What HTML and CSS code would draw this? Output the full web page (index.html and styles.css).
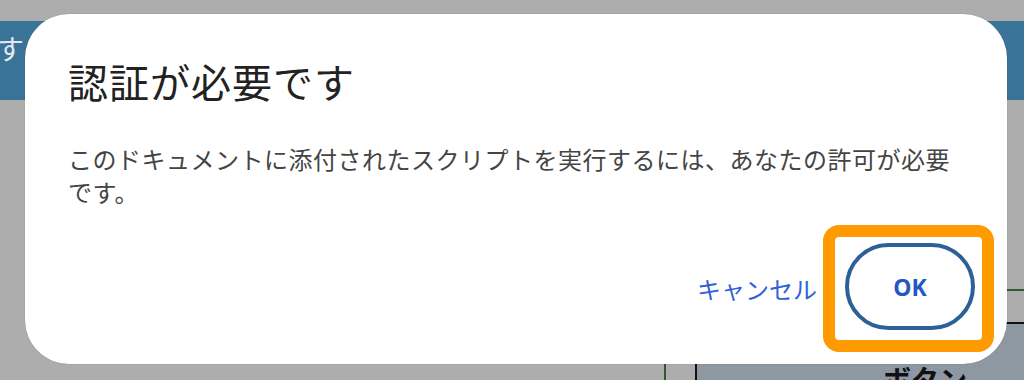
FILE: index.html
```html
<!DOCTYPE html>
<html lang="ja">
<head>
    <meta charset="UTF-8">
    <meta name="viewport" content="width=device-width, initial-scale=1.0">
    <title>認証が必要です</title>
    <link rel="stylesheet" href="styles.css">
</head>
<body>
    <div class="page">
        <div class="banner"><span class="banner-text">す</span></div>
        <div class="workspace">
            <div class="cell-left"></div>
            <div class="cell-right">
                <div class="cell-gap"></div>
                <div class="panel">
                    <span class="panel-label">ボタン</span>
                </div>
            </div>
        </div>
    </div>

    <div class="dialog">
        <h2 class="dialog-title">認証が必要です</h2>
        <p class="dialog-text">このドキュメントに添付されたスクリプトを実行するには、あなたの許可が必要です。</p>
        <div class="dialog-actions">
            <button class="btn-cancel">キャンセル</button>
            <div class="highlight">
                <button class="btn-ok">OK</button>
            </div>
        </div>
    </div>
</body>
</html>
```

FILE: styles.css
```css
body {
    margin: 0;
    height: 380px;
    overflow: hidden;
    background: #adadad;
    font-family: "Noto Sans CJK JP", "Noto Sans", sans-serif;
}
.page {
    padding-top: 21px;
}
.banner {
    height: 79px;
    background: #3a7398;
    color: #e2e9ef;
    font-size: 28px;
    line-height: 40px;
    padding-top: 7px;
    box-sizing: border-box;
    overflow: hidden;
}
.banner-text {
    margin-left: -4px;
}
.workspace {
    display: flex;
    margin-top: 189px;
    height: 91px;
}
.cell-left {
    width: 664px;
    border-right: 2px solid #2e5a30;
}
.cell-right {
    flex: 1;
    display: flex;
    border-top: 2px solid #2e5a30;
}
.cell-gap {
    width: 29px;
}
.panel {
    flex: 1;
    margin-top: 31px;
    background: #8d98a3;
    border-top: 2px solid #111;
    border-left: 2px solid #111;
    padding: 41px 0 0 186px;
    overflow: hidden;
}
.panel-label {
    font-size: 28px;
    line-height: 28px;
    font-weight: bold;
    color: #111;
}

/* modal */
.dialog {
    position: absolute;
    top: 14px;
    left: 25px;
    width: 982px;
    height: 350px;
    background: #fff;
    border-radius: 44px;
    box-shadow: 0 0 1px rgba(0, 0, 0, 0.35);
    display: flex;
    flex-direction: column;
}
.dialog-title {
    margin: 43px 43px 0;
    font-size: 40px;
    line-height: 48px;
    font-weight: normal;
    letter-spacing: 1px;
    color: #222;
}
.dialog-text {
    margin: 37px 43px 0;
    font-size: 24px;
    line-height: 33px;
    letter-spacing: 0.5px;
    color: #444;
}
.dialog-actions {
    display: flex;
    justify-content: flex-end;
    align-items: center;
    margin-top: 17px;
    padding-right: 13px;
}
button {
    font-family: inherit;
    background: none;
    border: none;
    cursor: pointer;
    padding: 0;
}
.btn-cancel {
    font-size: 24px;
    color: #2f62d4;
    margin-right: 6px;
}
.highlight {
    border: 12px solid #ff9a00;
    border-radius: 16px;
    padding: 6px 7px 10px 10px;
}
.btn-ok {
    display: block;
    width: 130px;
    height: 87px;
    border: 4px solid #2d6096;
    border-radius: 44px;
    box-sizing: border-box;
    font-family: "Noto Sans", sans-serif;
    font-size: 23px;
    font-weight: bold;
    color: #2457c5;
}
```
